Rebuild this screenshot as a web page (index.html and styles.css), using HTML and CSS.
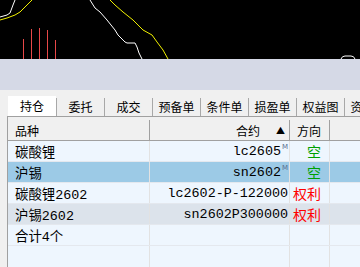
FILE: index.html
```html
<!DOCTYPE html>
<html lang="zh">
<head>
    <meta charset="UTF-8">
    <title>持仓</title>
    <link rel="stylesheet" href="styles.css">
</head>
<body>
<div class="chart">
    <svg width="360" height="59" viewBox="0 0 360 59">
        <polyline class="line-white" points="0,17 7,15 10,13 13,5 15,0"/>
        <polyline class="line-yellow" points="0,20 7,18 15,15 20,12 27,5 32,0"/>
        <polyline class="line-white" points="90,0 95,8 100,12 107,20 115,30 118,35 125,42 127,43 135,43 137,47 139,53 142,59"/>
        <polyline class="line-yellow" points="110,0 115,5 123,12 133,20 143,30 152,35 157,42 163,50 168,59"/>
        <g class="bars">
            <line x1="23.5" y1="39" x2="23.5" y2="59"/>
            <line x1="31.5" y1="29" x2="31.5" y2="59"/>
            <line x1="39.5" y1="28" x2="39.5" y2="59"/>
            <line x1="47.5" y1="30" x2="47.5" y2="59"/>
            <line x1="55.5" y1="40" x2="55.5" y2="59"/>
        </g>
        <path class="line-white" d="M341,59 Q342,56 345,56 L351,56 Q354,56 355,59"/>
    </svg>
</div>
<div class="band"></div>

<div class="panel">
    <div class="tabs">
        <div class="tab active">持仓</div>
        <div class="tab">委托</div>
        <div class="tab">成交</div>
        <div class="tab">预备单</div>
        <div class="tab">条件单</div>
        <div class="tab">损盈单</div>
        <div class="tab">权益图</div>
        <div class="tab">资金表</div>
    </div>

    <div class="grid">
        <div class="row head">
            <div class="cell name">品种</div>
            <div class="cell code">合约<span class="sort">▲</span></div>
            <div class="cell dir">方向</div>
            <div class="cell rest"></div>
        </div>
        <div class="row">
            <div class="cell name">碳酸锂</div>
            <div class="cell code">lc2605<sup class="tag">M</sup></div>
            <div class="cell dir short">空</div>
            <div class="cell rest"></div>
        </div>
        <div class="row selected">
            <div class="cell name">沪锡</div>
            <div class="cell code">sn2602<sup class="tag">M</sup></div>
            <div class="cell dir short">空</div>
            <div class="cell rest"></div>
        </div>
        <div class="row">
            <div class="cell name">碳酸锂2602</div>
            <div class="cell code">lc2602-P-122000</div>
            <div class="cell dir option">权利</div>
            <div class="cell rest"></div>
        </div>
        <div class="row alt">
            <div class="cell name">沪锡2602</div>
            <div class="cell code">sn2602P300000</div>
            <div class="cell dir option">权利</div>
            <div class="cell rest"></div>
        </div>
        <div class="row">
            <div class="cell name">合计4个</div>
            <div class="cell code"></div>
            <div class="cell dir"></div>
            <div class="cell rest"></div>
        </div>
        <div class="row filler">
            <div class="cell name"></div>
            <div class="cell code"></div>
            <div class="cell dir"></div>
            <div class="cell rest"></div>
        </div>
    </div>
</div>
</body>
</html>
```

FILE: styles.css
```css
html, body {
    margin: 0;
    padding: 0;
    overflow: hidden;
}

body {
    width: 360px;
    height: 267px;
    background-color: #f0f0f0;
    font-family: "Noto Sans CJK SC", sans-serif;
    color: #000000;
}

.chart {
    height: 59px;
    background-color: #000000;
}

.chart svg {
    display: block;
}

.line-white {
    fill: none;
    stroke: #ffffff;
    stroke-width: 1;
}

.line-yellow {
    fill: none;
    stroke: #f0f000;
    stroke-width: 1;
}

.bars line {
    stroke: #e84848;
    stroke-width: 1;
    shape-rendering: crispEdges;
}

.band {
    height: 31px;
    background-color: #d5d9e6;
}

.panel {
    padding: 6px 0 0 7px;
}

.tabs {
    display: flex;
    height: 20px;
    padding-left: 1px;
    white-space: nowrap;
}

.tab {
    flex: 0 0 48px;
    box-sizing: border-box;
    border-left: 1px solid #a8a8a8;
    margin-top: 2px;
    display: flex;
    align-items: center;
    justify-content: center;
    font-size: 12px;
    line-height: 12px;
}

.tab.active {
    background-color: #ffffff;
    border-left: none;
    margin-top: 0;
    padding-bottom: 0;
}

.grid {
    border-left: 1px solid #a0a0a0;
    border-top: 1px solid #a0a0a0;
    background-color: #eef6fe;
}

.row {
    display: flex;
    height: 20px;
    border-bottom: 1px solid #e4e8ee;
    font-family: "Liberation Mono", "Noto Sans CJK SC", monospace;
    font-size: 13.4px;
    white-space: nowrap;
}

.row.selected {
    background-color: #9ccae6;
}

.row.alt {
    background-color: #dce3eb;
}

.row.filler {
    height: 30px;
    border-bottom: none;
}

.row.head {
    height: 20px;
    padding-top: 3px;
    background-color: #f0f0f0;
    border-bottom: 1px solid #a0a0a0;
    font-family: "Noto Sans CJK SC", sans-serif;
    font-size: 12px;
}

.cell {
    box-sizing: border-box;
    display: flex;
    align-items: center;
    border-right: 1px solid #e2e2e2;
    overflow: hidden;
}

.row.head .cell {
    border-right-color: #a0a0a0;
}

.name {
    flex: 0 0 142px;
    padding-left: 7px;
}

.code {
    flex: 0 0 140px;
    justify-content: flex-end;
    padding-right: 1px;
}

.row.head .code {
    padding-right: 4px;
}

.sort {
    font-size: 9px;
    margin-left: 16px;
}

.dir {
    flex: 0 0 40px;
    justify-content: flex-end;
    padding-right: 8px;
    font-family: "Noto Sans CJK SC", sans-serif;
}

.rest {
    flex: 1 1 auto;
    border-right: none;
}

.tag {
    font-family: "DejaVu Sans", sans-serif;
    font-size: 7px;
    color: #5a6e90;
    align-self: flex-start;
    margin-top: 2px;
    margin-left: 1px;
}

.short {
    color: #00a000;
    font-size: 14px;
}

.option {
    color: #ff0000;
    font-size: 14px;
}
```
